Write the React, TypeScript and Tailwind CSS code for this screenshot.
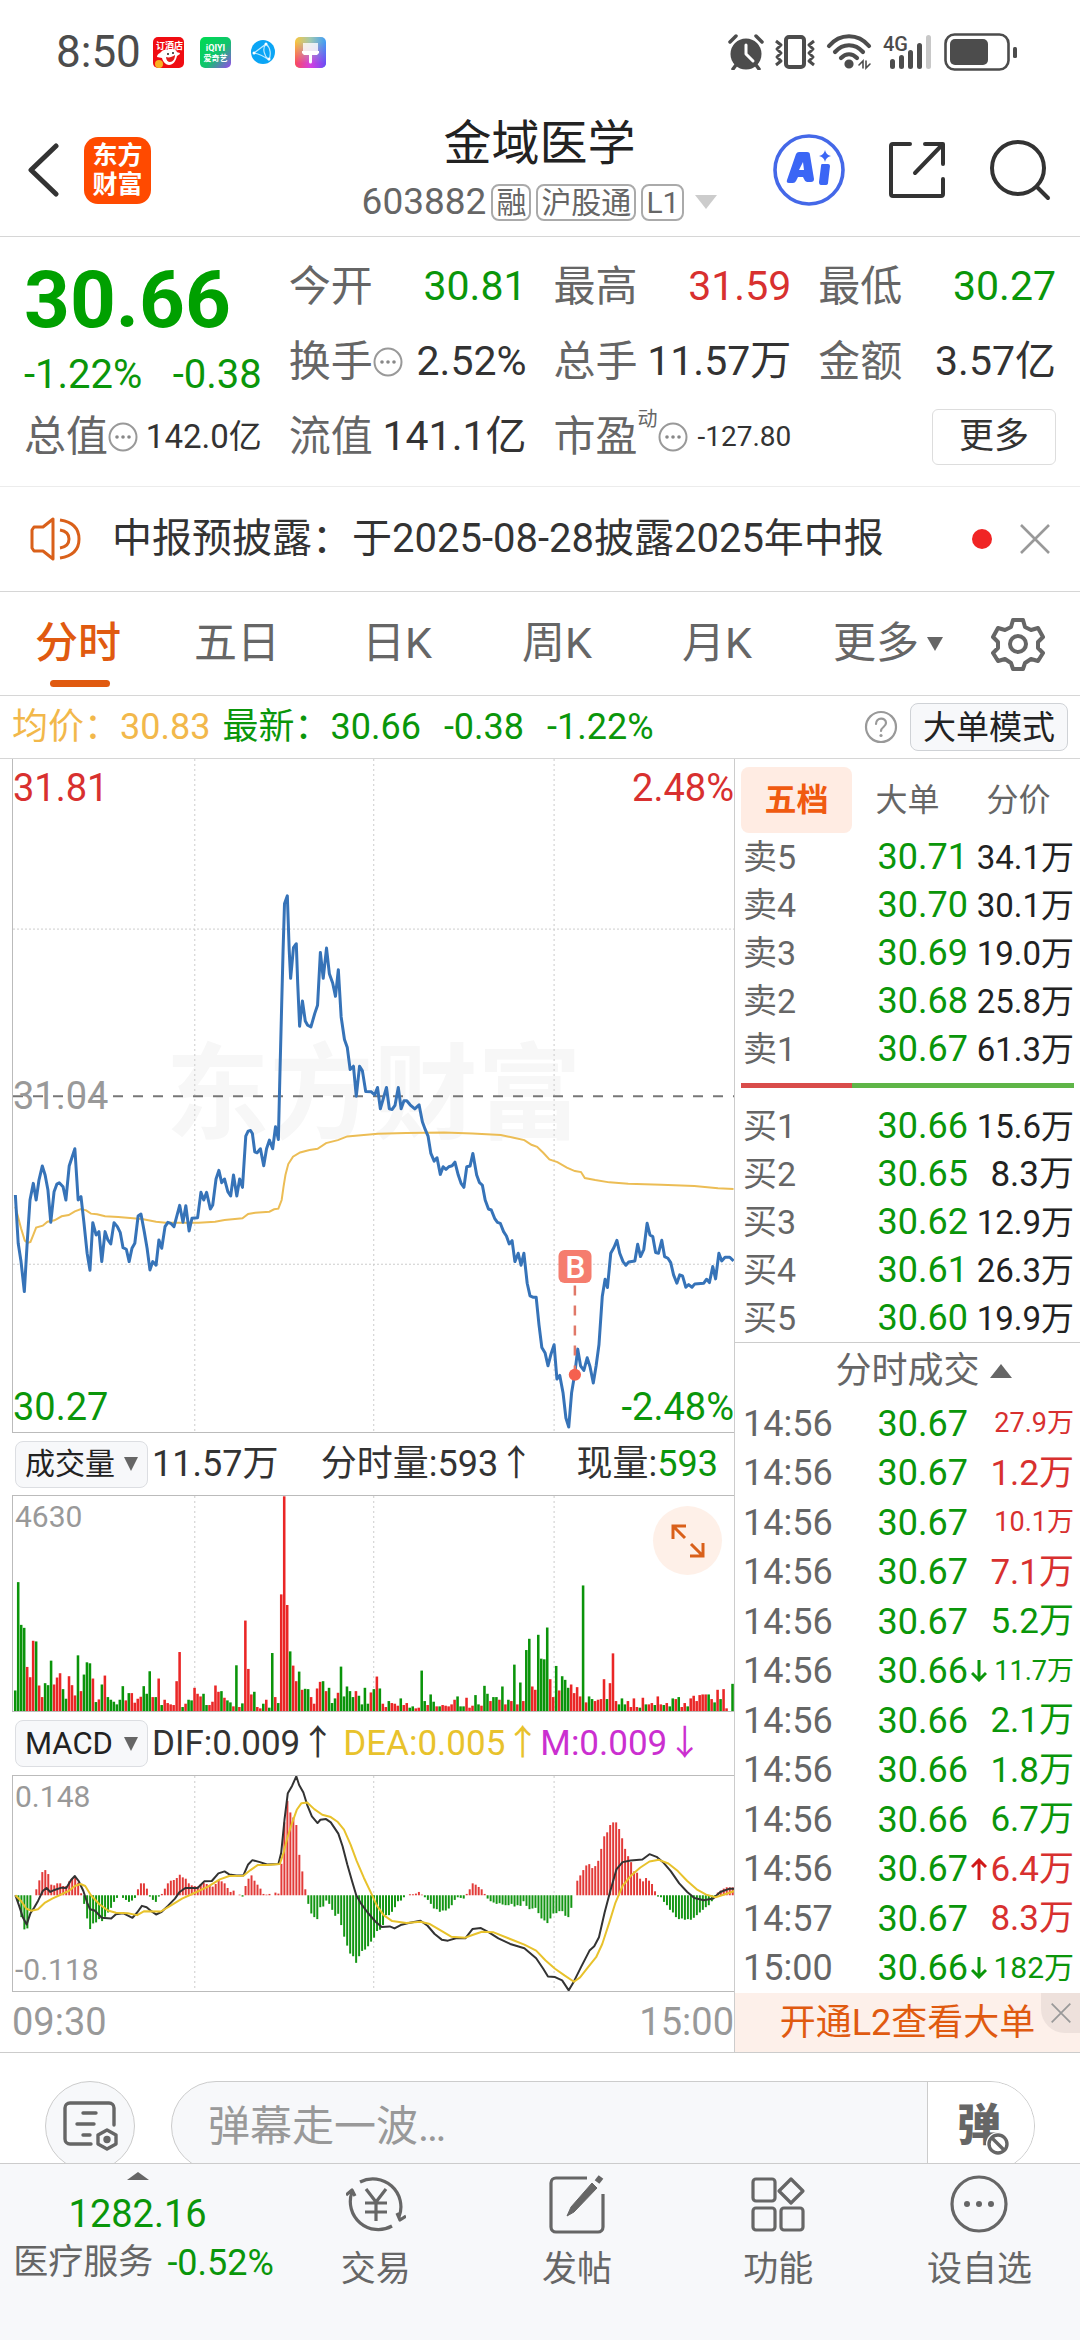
import type { ReactNode } from 'react';

const PRICE_LINE =
  '32,1335 38,1480 44,1535 51,1625 57,1480 63,1350 70,1300 76,1350 82,1290 89,1248 95,1275 101,1320 107,1417 114,1325 120,1302 125,1298 133,1310 139,1350 146,1248 158,1196 165,1350 171,1340 177,1415 184,1510 190,1561 196,1418 203,1455 209,1445 215,1535 222,1445 228,1470 234,1482 241,1418 248,1430 254,1447 260,1493 267,1498 273,1535 279,1495 285,1480 292,1398 298,1392 305,1445 311,1495 317,1560 323,1535 330,1546 336,1470 342,1495 349,1430 355,1417 361,1420 368,1430 380,1366 387,1417 393,1367 400,1443 406,1405 418,1403 425,1327 431,1350 437,1327 445,1377 450,1365 457,1287 463,1261 469,1298 475,1287 482,1325 488,1338 494,1275 501,1338 507,1287 513,1312 520,1158 525,1143 530,1141 534,1150 539,1205 544,1208 551,1196 558,1247 564,1196 570,1170 577,1196 583,1130 589,1168 592,990 596,765 599,600 602,460 608,436 612,600 615,684 621,592 627,580 630,700 634,828 640,752 646,812 651,825 658,830 666,790 672,765 678,606 684,684 691,593 697,670 704,698 710,738 716,658 722,800 729,868 735,892 741,958 748,948 754,1038 761,948 767,962 774,1024 786,1025 793,1034 799,1012 805,1076 818,1012 824,1076 830,1078 836,1066 843,1012 849,1076 855,1052 861,1052 868,1064 878,1076 887,1064 894,1115 900,1138 906,1158 912,1210 919,1233 925,1223 932,1273 938,1250 944,1258 950,1250 957,1247 963,1236 970,1275 976,1300 982,1312 988,1250 995,1248 1001,1210 1009,1275 1015,1298 1021,1305 1027,1350 1034,1377 1040,1380 1047,1405 1053,1417 1059,1420 1066,1445 1072,1458 1078,1482 1084,1472 1090,1535 1097,1510 1103,1546 1109,1510 1116,1600 1122,1638 1128,1642 1135,1642 1141,1725 1147,1793 1154,1810 1160,1848 1166,1815 1173,1785 1179,1888 1185,1877 1192,1930 1198,2005 1204,2032 1210,1930 1217,1870 1223,1798 1229,1848 1236,1862 1243,1824 1249,1850 1256,1900 1262,1848 1268,1785 1275,1640 1281,1588 1286,1613 1293,1510 1300,1492 1306,1471 1312,1510 1319,1535 1325,1546 1331,1536 1344,1533 1350,1483 1356,1520 1363,1498 1370,1420 1376,1455 1382,1460 1388,1508 1394,1510 1401,1471 1407,1520 1414,1525 1420,1538 1426,1575 1433,1600 1439,1575 1445,1578 1452,1612 1458,1604 1465,1612 1471,1602 1490,1600 1496,1588 1502,1598 1509,1550 1515,1587 1522,1510 1528,1533 1535,1522 1545,1522 1553,1533';

const AVERAGE_LINE =
  '32,1370 44,1435 52,1472 58,1479 64,1476 70,1455 76,1433 90,1427 100,1415 115,1411 130,1399 145,1395 158,1384 171,1377 182,1381 192,1391 205,1393 222,1399 250,1401 275,1404 300,1407 330,1415 350,1418 420,1418 455,1415 475,1410 513,1405 525,1392 540,1388 570,1385 580,1378 589,1376 596,1350 600,1310 604,1275 610,1242 620,1220 635,1207 655,1200 672,1196 690,1179 715,1170 735,1159 770,1155 800,1151 860,1149 940,1147 1000,1150 1060,1155 1085,1162 1110,1170 1125,1184 1137,1190 1150,1208 1163,1228 1180,1236 1200,1253 1217,1263 1230,1266 1238,1284 1260,1290 1290,1297 1330,1301 1400,1304 1470,1308 1520,1315 1553,1317';

const DIF_LINE =
  '32,558 40,590 48,625 56,646 64,612 72,595 80,575 90,545 98,536 106,548 115,542 130,535 140,536 150,512 158,500 166,515 176,545 184,580 190,600 200,604 215,626 235,628 245,615 260,612 280,626 290,610 300,590 310,594 320,606 330,616 342,608 355,590 370,568 380,548 392,536 418,536 432,516 448,515 462,492 475,486 485,495 500,498 515,498 525,465 534,452 550,458 565,465 589,464 595,430 602,330 609,250 618,228 627,199 633,225 642,248 650,285 660,320 672,340 678,330 690,328 700,338 716,372 725,410 735,465 745,515 754,558 765,585 778,610 795,638 808,654 825,652 835,658 848,648 865,642 890,635 905,650 920,675 935,692 948,695 965,688 985,688 1000,660 1018,657 1035,670 1055,688 1080,705 1110,718 1135,748 1150,780 1160,803 1175,805 1190,815 1204,845 1215,818 1230,775 1248,725 1258,712 1268,685 1280,610 1292,545 1305,480 1318,458 1335,453 1360,450 1375,434 1390,442 1405,460 1420,485 1438,522 1455,548 1470,566 1490,573 1510,568 1525,548 1545,538 1555,538';

const DEA_LINE =
  '32,558 44,575 55,598 66,605 80,600 95,580 110,568 130,555 145,545 158,530 170,524 180,530 192,558 210,585 228,604 245,611 270,612 290,618 305,606 340,607 360,590 385,568 410,552 440,532 465,510 485,500 515,499 530,482 545,467 565,467 592,464 600,430 608,385 618,340 628,300 638,280 650,278 665,298 682,315 700,322 715,337 728,360 742,405 755,455 770,505 785,550 798,590 812,618 830,636 860,642 890,638 910,645 930,662 955,683 985,686 1000,678 1020,668 1045,670 1080,690 1110,707 1135,725 1155,755 1175,780 1195,800 1215,819 1228,806 1245,775 1262,745 1275,705 1290,640 1303,580 1318,530 1335,500 1355,475 1375,456 1395,451 1415,462 1435,485 1455,515 1475,540 1495,556 1515,564 1535,555 1555,545';

// One value per minute; positive bars are up ticks, negative bars are down ticks.
const VOLUME = [
  -62, -389, -260, -251, 133, 102, 212, -210, 77, 42, -84, -78, -152, 80, 101, 114, -66, -37, 105, 78, 47, -168, 60, -110, -147, -144, 98, -27, 35, -80,
  107, -42, -34, -28, -20, -34, -75, 32, -54, 54, 25, 37, 43, -75, -52, -120, 42, -42, 98, -18, 34, 24, 20, 18, 90, 178, -12, 22, -34, -32,
  70, 52, 44, -52, -18, 18, 28, 77, 58, -60, 40, -32, -26, 14, -138, 12, -23, 273, 127, 50, -58, 12, 8, -22, 34, -10, -175, 42, -24, 352,
  648, 320, -180, 137, 90, -119, 64, -67, -66, 42, 22, 68, 88, -90, 60, -70, -24, -38, 55, -134, -44, -74, -60, -42, 60, -46, -20, -70, -22, 56,
  -66, 104, -68, 22, 12, -30, 24, 22, 16, -38, 18, 24, -10, -14, 8, 10, -122, -30, 18, -50, -28, 14, -14, 18, 16, 14, 20, 34, -44, -14,
  -14, 40, 10, 16, -48, -20, 16, -76, -52, 30, -42, -42, 34, -74, 20, -34, 30, -140, 20, -86, 30, -184, -218, 74, 64, -230, -158, -156, -252, 96,
  42, -136, 62, -105, -94, -70, 80, 54, 72, 44, -379, 26, -44, -36, 30, 34, 36, 96, -36, 84, 174, 30, -20, -38, -20, 30, 12, 38, 12, -10,
  40, -20, 20, 24, -18, 44, 20, -18, 24, -14, -38, 36, -42, 12, 24, -14, 38, 46, 30, 48, 50, 50, -50, 36, -26, 64, -36, 66, 8, 0,
  -82,
];

const MACD = [
  0, -20, -66, -103, -100, -45, 0, 18, 45, 70, 76, 64, 32, 30, 36, 36, 28, 28, 42, 50, 54, 38, 6, -26, -70, -102, -85, -82, -72, -78,
  -65, -52, -38, -20, -8, 0, -8, -14, -20, -16, -8, 18, 36, 36, 20, -4, -14, -20, -4, 4, 20, 36, 44, 46, 52, 62, 54, 50, 36, 30,
  28, 26, 34, 38, 34, 28, 26, 34, 46, 42, 36, 22, 10, 14, 0, 2, -4, 28, 50, 60, 44, 32, 20, 4, 2, 4, 0, 8, 5, 95,
  220, 285, 250, 235, 212, 122, 72, 18, -26, -55, -66, -72, -36, -34, -16, -26, -44, -62, -56, -90, -125, -152, -176, -184, -204, -184, -168, -164, -154, -140,
  -128, -108, -104, -90, -60, -60, -50, -36, -18, -16, -6, 0, 3, 3, 5, 10, 2, -6, -14, -26, -40, -42, -50, -46, -46, -40, -30, -14, -6, -8,
  -10, 4, 18, 36, 32, 25, 18, 4, -10, -18, -22, -26, -24, -28, -30, -30, -26, -34, -30, -32, -18, -32, -42, -40, -38, -54, -70, -76, -84, -70,
  -55, -54, -48, -48, -62, -66, -38, 0, 44, 60, 76, 90, 94, 82, 88, 104, 140, 178, 190, 212, 220, 220, 200, 172, 140, 118, 100, 72, 68, 50,
  42, 52, 44, 34, 12, -4, -6, -20, -30, -44, -52, -66, -72, -70, -74, -72, -74, -68, -60, -52, -44, -36, -30, -18, -6, 8, 14, 20, 24, 24,
  24,
];

const barX = (i: number) => 32 + i * 6.33;

type Level = { name: string; price: string; volume: string; big?: boolean };
const ASKS: Level[] = [
  { name: '卖5', price: '30.71', volume: '34.1万' },
  { name: '卖4', price: '30.70', volume: '30.1万' },
  { name: '卖3', price: '30.69', volume: '19.0万' },
  { name: '卖2', price: '30.68', volume: '25.8万' },
  { name: '卖1', price: '30.67', volume: '61.3万' },
];
const BIDS: Level[] = [
  { name: '买1', price: '30.66', volume: '15.6万' },
  { name: '买2', price: '30.65', volume: '8.3万', big: true },
  { name: '买3', price: '30.62', volume: '12.9万' },
  { name: '买4', price: '30.61', volume: '26.3万' },
  { name: '买5', price: '30.60', volume: '19.9万' },
];

const S = 'text-[27px]';
const M = 'text-[30px]';
const L = 'text-[35px]';
const RED = 'text-[#d8302f]';
const GREEN = 'text-[#0a960a]';
const TRADES: { time: string; price: string; dir?: 'up' | 'down'; vol: string; size: string; color: string }[] = [
  { time: '14:56', price: '30.67', vol: '27.9万', size: S, color: RED },
  { time: '14:56', price: '30.67', vol: '1.2万', size: L, color: RED },
  { time: '14:56', price: '30.67', vol: '10.1万', size: S, color: RED },
  { time: '14:56', price: '30.67', vol: '7.1万', size: L, color: RED },
  { time: '14:56', price: '30.67', vol: '5.2万', size: L, color: GREEN },
  { time: '14:56', price: '30.66', dir: 'down', vol: '11.7万', size: S, color: GREEN },
  { time: '14:56', price: '30.66', vol: '2.1万', size: L, color: GREEN },
  { time: '14:56', price: '30.66', vol: '1.8万', size: L, color: GREEN },
  { time: '14:56', price: '30.66', vol: '6.7万', size: L, color: GREEN },
  { time: '14:56', price: '30.67', dir: 'up', vol: '6.4万', size: L, color: RED },
  { time: '14:57', price: '30.67', vol: '8.3万', size: L, color: RED },
  { time: '15:00', price: '30.66', dir: 'down', vol: '182万', size: M, color: GREEN },
];

function Triangle({ up = false, className }: { up?: boolean; className: string }) {
  return (
    <svg viewBox="0 0 20 14" preserveAspectRatio="none" className={className} aria-hidden="true">
      <path d={up ? 'M0 14 10 0l10 14z' : 'M0 0h20L10 14z'} fill="currentColor" />
    </svg>
  );
}

function InfoDots() {
  return (
    <svg viewBox="0 0 30 30" className="h-[30px] w-[30px] shrink-0" aria-hidden="true">
      <circle cx="15" cy="15" r="13.5" fill="none" stroke="#999" strokeWidth="2" />
      <circle cx="9" cy="15" r="1.8" fill="#888" />
      <circle cx="15" cy="15" r="1.8" fill="#888" />
      <circle cx="21" cy="15" r="1.8" fill="#888" />
    </svg>
  );
}

function Cross({ className }: { className: string }) {
  return (
    <svg viewBox="0 0 30 30" className={className} fill="none" stroke="currentColor" strokeWidth="2.6" aria-hidden="true">
      <path d="M1 1 29 29M29 1 1 29" />
    </svg>
  );
}

function StatusBar() {
  return (
    <div className="flex h-[104px] items-center justify-between pl-14 pr-[62px] text-[#4c4c4c]">
      <div className="flex items-center">
        <span className="text-[44px] leading-none">8:50</span>
        <svg viewBox="0 0 31 31" className="ml-3 h-[31px] w-[31px]" aria-hidden="true">
          <rect width="31" height="31" rx="5" fill="#f00c12" />
          <text x="3" y="12" fontSize="9" fontWeight="700" fill="#fff">订酒店</text>
          <path d="M7 16c2-3 5-4 8-3 3-2 8-1 9 2 1 1 3 0 3 2l-3 2c-1 5-4 9-8 9-3 0-6-3-7-7l-5-1c0-2 1-3 3-4z" fill="#fff" />
          <path d="M13 20c3 1 6 0 9-2 0 4-2 7-5 7-2 0-4-2-4-5z" fill="#e01c1c" />
          <circle cx="15" cy="17" r="1" fill="#222" /><circle cx="20" cy="16" r="1" fill="#222" />
          <circle cx="6" cy="27" r="4" fill="#f8b021" />
        </svg>
        <svg viewBox="0 0 31 31" className="ml-4 h-[31px] w-[31px]" aria-hidden="true">
          <defs>
            <linearGradient id="video" x1="0" y1="0" x2="1" y2="1">
              <stop offset="0" stopColor="#00dc52" /><stop offset=".55" stopColor="#10c46c" /><stop offset="1" stopColor="#9a45f0" />
            </linearGradient>
          </defs>
          <rect width="31" height="31" rx="5" fill="url(#video)" />
          <text x="15.5" y="14" fontSize="9" fontWeight="700" textAnchor="middle" fill="#fff">iQIYI</text>
          <text x="15.5" y="24" fontSize="8" fontWeight="700" textAnchor="middle" fill="#fff">爱奇艺</text>
        </svg>
        <svg viewBox="0 0 24 24" className="ml-5 h-6 w-6" aria-hidden="true">
          <circle cx="12" cy="12" r="12" fill="#0ba5f5" />
          <path d="M3 13 15 4M3 13c5 1 11 4 15 7M15 4c-4 4-2 12 3 16M15 4c5 4 5 11 3 16" fill="none" stroke="#bfeaff" strokeWidth="1.2" />
          <circle cx="15" cy="4" r="1.500" fill="#fff" /><circle cx="3" cy="13" r="1.500" fill="#fff" /><circle cx="18" cy="19" r="1.500" fill="#fff" />
        </svg>
        <svg viewBox="0 0 31 31" className="ml-5 h-[31px] w-[31px]" aria-hidden="true">
          <defs>
            <linearGradient id="theme" x1="0" y1="0" x2="1" y2="0">
              <stop offset="0" stopColor="#fbc63c" /><stop offset=".5" stopColor="#9fc8b0" /><stop offset="1" stopColor="#3f9cf7" />
            </linearGradient>
            <linearGradient id="themeLow" x1="0" y1="0" x2="1" y2="0">
              <stop offset="0" stopColor="#f9485e" /><stop offset=".5" stopColor="#d43fe0" /><stop offset="1" stopColor="#6a4df5" />
            </linearGradient>
            <linearGradient id="fade" x1="0" y1="0" x2="0" y2="1">
              <stop offset=".15" stopColor="#000" /><stop offset=".85" stopColor="#fff" />
            </linearGradient>
            <mask id="fadeMask"><rect width="31" height="31" fill="url(#fade)" /></mask>
          </defs>
          <rect width="31" height="31" rx="5" fill="url(#theme)" />
          <rect width="31" height="31" rx="5" fill="url(#themeLow)" mask="url(#fadeMask)" />
          <path d="M8 6h15v8H8z" fill="#fff" opacity=".8" />
          <path d="M7 14h17v2l-2 2h-5v7a1.500 1.500 0 0 1-3 0v-7H9l-2-2z" fill="#fff" />
        </svg>
      </div>
      <div className="flex items-center gap-2.5">
        <svg viewBox="0 0 36 36" className="h-9 w-9" fill="none" aria-hidden="true">
          <circle cx="18" cy="20" r="15.500" fill="#4c4c4c" />
          <path d="M2 8 8 2M28 2l6 6M8 31l-3 4M28 31l3 4" stroke="#4c4c4c" strokeWidth="3.500" strokeLinecap="round" />
          <path d="M18 11v9l7 7" stroke="#fff" strokeWidth="3" strokeLinecap="round" strokeLinejoin="round" />
        </svg>
        <svg viewBox="0 0 42 36" className="h-9 w-[42px]" fill="none" stroke="#4c4c4c" aria-hidden="true">
          <rect x="12" y="3" width="18" height="30" rx="3" strokeWidth="4" />
          <path d="m2 7 5 4-4 4 4 4-4 4 4 4-5 4M40 7l-5 4 4 4-4 4 4 4-4 4 5 4" strokeWidth="3" strokeLinejoin="round" />
        </svg>
        <svg viewBox="0 0 46 36" className="h-9 w-[46px]" fill="none" stroke="#4c4c4c" strokeWidth="4.200" strokeLinecap="round" aria-hidden="true">
          <path d="M3 12C14-1 32-1 43 12M9 18c8-9 20-9 28 0M15 24c5-5 11-5 16 0" />
          <circle cx="23" cy="30" r="2.500" fill="#4c4c4c" />
          <path d="m33 31 4-4v7M40 27v7l4-4" strokeWidth="1.600" />
        </svg>
        <svg viewBox="0 0 52 36" className="h-9 w-[52px] overflow-visible" aria-hidden="true">
          <text x="1" y="17" fontSize="20" fontWeight="500" fill="#4c4c4c">4G</text>
          <rect x="8" y="25" width="5" height="10" rx="2.500" fill="#4c4c4c" />
          <rect x="17" y="21" width="5" height="14" rx="2.500" fill="#4c4c4c" />
          <rect x="26" y="16" width="5" height="19" rx="2.500" fill="#4c4c4c" />
          <rect x="35" y="9" width="5" height="26" rx="2.500" fill="#4c4c4c" />
          <rect x="44" y="1" width="5" height="34" rx="2.500" fill="#c8c8c8" />
        </svg>
        <svg viewBox="0 0 74 38" className="h-[38px] w-[74px]" aria-hidden="true">
          <rect x="1.500" y="1.500" width="63" height="35" rx="9" fill="none" stroke="#4c4c4c" strokeWidth="2.600" />
          <rect x="6" y="6" width="38" height="26" rx="5" fill="#4c4c4c" />
          <rect x="69" y="14" width="4" height="11" rx="1.500" fill="#4c4c4c" />
        </svg>
      </div>
    </div>
  );
}

function Tag({ children }: { children: ReactNode }) {
  return <span className="rounded-lg border-2 border-[#aaa] px-[3px] text-[30px] leading-[33px] text-[#666]">{children}</span>;
}

function Header() {
  return (
    <header className="grid h-[133px] grid-cols-[1fr_auto_1fr] items-center border-b border-[#d6d6d6] pl-7 pr-[29px]">
      <div className="flex items-center gap-6">
        <button aria-label="返回">
          <svg viewBox="0 0 32 56" className="h-14 w-8" fill="none" stroke="#333" strokeWidth="5" strokeLinecap="round" strokeLinejoin="round" aria-hidden="true">
            <path d="M28 4 3 28l25 24" />
          </svg>
        </button>
        <button aria-label="东方财富" className="grid h-[67px] w-[67px] place-content-center rounded-[14px] bg-[#ff4a00] text-[25px] font-bold leading-[29px] text-white">
          <span>东方</span>
          <span>财富</span>
        </button>
      </div>
      <div className="flex flex-col items-center">
        <h1 className="text-[48px] leading-[60px] text-[#222]">金域医学</h1>
        <button className="flex items-center gap-[5px] pt-1 text-[37px] leading-[48px] text-[#666]">
          603882
          <Tag>融</Tag>
          <Tag>沪股通</Tag>
          <Tag>L1</Tag>
          <Triangle className="ml-1.5 h-3.5 w-[22px] text-[#ccc]" />
        </button>
      </div>
      <div className="flex items-center justify-end gap-[43px]">
        <button aria-label="AI 助手">
          <svg viewBox="0 0 72 72" className="h-[72px] w-[72px]" aria-hidden="true">
            <circle cx="36" cy="36" r="34" fill="none" stroke="#4468e8" strokeWidth="3.600" />
            <path fillRule="evenodd" d="M23 20q1-2 3-2h8q3 0 3 3l4 24q0 3-3 3h-4q-2 0-3-3l-1-2h-5l-2 4q-1 2-3 2h-4q-3 0-2-3zM30 28l-4 8h5z" fill="#3b66f5" />
            <path d="M49 30h6q2 0 2 2l-2 17q0 2-3 2h-4q-2 0-2-3l2-16q0-2 1-2z" fill="#3b66f5" />
            <path d="M52 16q1 5 6 6-5 1-6 6-1-5-6-6 5-1 6-6z" fill="#3b66f5" />
          </svg>
        </button>
        <button aria-label="分享">
          <svg viewBox="0 0 58 58" className="h-[58px] w-[58px]" fill="none" stroke="#333" strokeWidth="4" strokeLinecap="round" strokeLinejoin="round" aria-hidden="true">
            <path d="M22 3H5a2 2 0 0 0-2 2v48a2 2 0 0 0 2 2h48a2 2 0 0 0 2-2V38M37 3h18v20M54 4 27 32" />
          </svg>
        </button>
        <button aria-label="搜索">
          <svg viewBox="0 0 62 62" className="h-[62px] w-[62px]" fill="none" stroke="#333" strokeWidth="4" strokeLinecap="round" aria-hidden="true">
            <circle cx="29" cy="29" r="26" />
            <path d="m48 48 11 11" />
          </svg>
        </button>
      </div>
    </header>
  );
}

function Stat({ label, value, color = 'text-[#333]', size = 'text-[41px]', info = false, sup }: { label: string; value: string; color?: string; size?: string; info?: boolean; sup?: string }) {
  return (
    <div className="flex h-[75px] items-center justify-between whitespace-nowrap leading-none">
      <dt className="flex items-center text-[42px] text-[#666]">
        {label}
        {sup && <sup className="top-0 -mt-9 text-[20px] leading-none">{sup}</sup>}
        {info && <InfoDots />}
      </dt>
      <dd className={`${size} ${color}`}>{value}</dd>
    </div>
  );
}

function Quote() {
  return (
    <section className="grid grid-cols-4 gap-x-[27px] border-b border-[#ececec] px-6 pb-3 pt-3">
      <div className="flex flex-col">
        <div className="flex h-[102px] items-center text-[80px] font-bold leading-none text-[#00a000]">30.66</div>
        <div className="flex h-12 items-center justify-between text-[40px] leading-none text-[#0a960a]">
          <span>-1.22%</span>
          <span>-0.38</span>
        </div>
        <dl><Stat label="总值" value="142.0亿" size="text-[33px]" info /></dl>
      </div>
      <dl>
        <Stat label="今开" value="30.81" color="text-[#0a960a]" />
        <Stat label="换手" value="2.52%" info />
        <Stat label="流值" value="141.1亿" />
      </dl>
      <dl>
        <Stat label="最高" value="31.59" color="text-[#d8302f]" />
        <Stat label="总手" value="11.57万" />
        <Stat label="市盈" value="-127.80" size="text-[28px]" info sup="动" />
      </dl>
      <div>
        <dl>
          <Stat label="最低" value="30.27" color="text-[#0a960a]" />
          <Stat label="金额" value="3.57亿" />
        </dl>
        <div className="flex h-[75px] items-center justify-end">
          <button className="h-14 w-[124px] rounded-md border border-[#ddd] text-[35px] leading-none text-[#333]">更多</button>
        </div>
      </div>
    </section>
  );
}

function Notice() {
  return (
    <section className="flex h-[105px] items-center border-b border-[#d6d6d6] px-[30px]">
      <svg viewBox="0 0 52 44" className="h-11 w-[52px]" fill="none" stroke="#d9601a" strokeWidth="3" strokeLinejoin="round" aria-hidden="true">
        <path d="M23 2v40l-10-8H4l-2-3V13l2-3h9z" />
        <path d="M30 3c13 2 19 9 19 19s-6 17-19 19M30 13c6 1 9 4 9 9s-3 8-9 9" />
      </svg>
      <p className="ml-[30px] flex-1 text-[40px] leading-none text-[#333]">中报预披露：于2025-08-28披露2025年中报</p>
      <span className="h-5 w-5 rounded-full bg-[#f02424]" />
      <button aria-label="关闭" className="ml-7 text-[#999]"><Cross className="h-[30px] w-[30px]" /></button>
    </section>
  );
}

function PeriodTabs() {
  return (
    <nav className="grid h-[104px] grid-cols-[repeat(5,160fr)_176fr_104fr] border-b border-[#d6d6d6] text-[43px] leading-none text-[#666]">
      <button aria-current="page" className="relative pr-1 font-medium text-[#e05a10]">
        分时
        <span className="absolute bottom-2 left-1/2 h-[7px] w-[60px] -translate-x-1/2 rounded bg-[#e05a10]" />
      </button>
      <button className="pr-1.5">五日</button>
      <button className="pr-1.5">日K</button>
      <button className="pr-1.5">周K</button>
      <button className="pr-1.5">月K</button>
      <button className="flex items-center justify-center gap-2">
        更多
        <Triangle className="h-3.5 w-4" />
      </button>
      <button aria-label="设置" className="flex items-center justify-center pr-5">
        <svg viewBox="0 0 54 54" className="h-[54px] w-[54px]" fill="none" stroke="#666" strokeWidth="4" strokeLinejoin="round" aria-hidden="true">
          <path d="M22 3h10l2 7 6 3 7-2 5 9-5 5v6l5 5-5 8-7-2-6 4-2 6H22l-2-6-6-4-7 2-5-8 5-5v-6l-5-5 5-9 7 2 6-3z" />
          <circle cx="27" cy="27" r="8" />
        </svg>
      </button>
    </nav>
  );
}

function SummaryRow() {
  return (
    <div className="flex h-[63px] items-center border-b border-[#d6d6d6] px-3 text-[36px] leading-none">
      <span className="mr-3 text-[#f2b84b]">均价：30.83</span>
      <span className="flex gap-[23px] text-[#0a960a]">
        <span>最新：30.66</span>
        <span>-0.38</span>
        <span>-1.22%</span>
      </span>
      <button aria-label="帮助" className="ml-auto mr-3">
        <svg viewBox="0 0 34 34" className="h-[34px] w-[34px]" aria-hidden="true">
          <circle cx="17" cy="17" r="15" fill="none" stroke="#999" strokeWidth="2.200" />
          <path d="M12 14c0-7 10-7 10-1 0 4-5 4-5 8" fill="none" stroke="#999" strokeWidth="2.200" strokeLinecap="round" />
          <circle cx="17" cy="25.500" r="1.600" fill="#999" />
        </svg>
      </button>
      <button className="h-12 rounded-lg border border-[#cfd2d6] bg-[#f7f8fa] px-3 text-[33px] leading-none text-[#222]">大单模式</button>
    </div>
  );
}

function Grid({ top, bottom }: { top: number; bottom: number }) {
  return (
    <>
      {[412, 791, 1173].map((x) => (
        <line key={x} x1={x} x2={x} y1={top} y2={bottom} stroke="#ccc" strokeWidth="1" strokeDasharray="2 3" vectorEffect="non-scaling-stroke" />
      ))}
    </>
  );
}

function PriceChart() {
  return (
    <div className="relative border-b border-l border-[#bbb] text-[38px] leading-none">
      <div className="absolute inset-0 flex items-center justify-center text-[104px] font-bold text-[#f7f7f7]">东方财富</div>
      <svg viewBox="27 25 1527 2022" preserveAspectRatio="none" className="relative block h-[673px] w-full" fill="none" role="img" aria-label="分时走势图">
        <Grid top={25} bottom={2047} />
        <path d="M27 536h1529M27 1543h1529" stroke="#ccc" strokeWidth="1" strokeDasharray="2 2" vectorEffect="non-scaling-stroke" />
        <path d="M27 1038h1529" stroke="#777" strokeWidth="2" strokeDasharray="10 10" vectorEffect="non-scaling-stroke" />
        <polyline points={AVERAGE_LINE} stroke="#ecbd55" strokeWidth="2" vectorEffect="non-scaling-stroke" />
        <polyline points={PRICE_LINE} stroke="#3673b8" strokeWidth="3" strokeLinejoin="round" vectorEffect="non-scaling-stroke" />
        <path d="M1217 1607v260" stroke="#e07868" strokeWidth="2.500" strokeDasharray="10 10" vectorEffect="non-scaling-stroke" />
        <ellipse cx="1217" cy="1875" rx="13" ry="18" fill="#f5604f" />
      </svg>
      <span className="absolute left-[78%] top-[73%] flex h-[33px] w-[33px] -translate-x-1/2 items-center justify-center rounded-md bg-[#f57d6e] text-[32px] font-medium text-white">B</span>
      <span className="absolute left-0 top-2.5 text-[#d8302f]">31.81</span>
      <span className="absolute right-0 top-2.5 text-[#d8302f]">2.48%</span>
      <span className="absolute left-0 top-1/2 -translate-y-1/2 text-[#999]">31.04</span>
      <span className="absolute bottom-1.5 left-0 text-[#0a960a]">30.27</span>
      <span className="absolute bottom-1.5 right-0 text-[#0a960a]">-2.48%</span>
    </div>
  );
}

function IndicatorButton({ children }: { children: ReactNode }) {
  return (
    <button className="mr-1 flex h-[47px] w-[133px] items-center justify-between rounded-lg border border-[#dcdee2] bg-[#f7f8fa] px-[9px] text-[#222]">
      {children}
      <Triangle className="h-3.5 w-3.5 text-[#666]" />
    </button>
  );
}

function VolumeChart() {
  return (
    <>
      <div className="flex h-[62px] items-center whitespace-nowrap pl-[3px] pr-4 text-[36px] leading-none text-[#333]">
        <IndicatorButton><span className="text-[30px]">成交量</span></IndicatorButton>
        <span>11.57万</span>
        <span className="mx-auto">分时量:593↑</span>
        <span>现量:<span className="text-[#0a960a]">593</span></span>
      </div>
      <div className="relative border border-r-0 border-[#bbb]">
        <svg viewBox="27 198 1527 649" preserveAspectRatio="none" className="block h-[215px] w-full" role="img" aria-label="成交量图">
          <Grid top={198} bottom={847} />
          {VOLUME.map((v, i) => (
            <rect key={i} x={barX(i) - 3} y={847 - Math.abs(v)} width="5.400" height={Math.abs(v)} fill={v > 0 ? '#ea2626' : '#0a940a'} />
          ))}
        </svg>
        <span className="absolute left-0.5 top-1.5 text-[30px] leading-none text-[#999]">4630</span>
        <button aria-label="全屏" className="absolute right-3 top-2.5 flex h-[69px] w-[69px] items-center justify-center rounded-full bg-[#fef0e8]">
          <svg viewBox="0 0 34 34" className="h-[34px] w-[34px]" fill="none" stroke="#d9601a" strokeWidth="3" aria-hidden="true">
            <path d="M2 15V2h13M3 3l11 11M32 19v13H19M31 31 20 20" />
          </svg>
        </button>
      </div>
    </>
  );
}

function MacdChart() {
  return (
    <>
      <div className="flex h-[63px] items-center whitespace-nowrap pl-[3px] text-[35px] leading-none">
        <IndicatorButton><span className="text-[31px]">MACD</span></IndicatorButton>
        <span className="mr-2 text-[#333]">DIF:0.009↑</span>
        <span className="text-[#e8c22c]">DEA:0.005↑</span>
        <span className="text-[#cb2fd0]">M:0.009↓</span>
      </div>
      <div className="relative border border-r-0 border-[#bbb] text-[30px] leading-none text-[#999]">
        <svg viewBox="27 198 1527 649" preserveAspectRatio="none" className="block h-[215px] w-full" fill="none" role="img" aria-label="MACD 图">
          <Grid top={198} bottom={847} />
          {MACD.map((v, i) => (
            <rect key={i} x={barX(i) - 2} y={v > 0 ? 558 - v : 558} width="4.200" height={Math.abs(v)} fill={v > 0 ? '#e23a38' : '#149614'} />
          ))}
          <polyline points={DIF_LINE} stroke="#333" strokeWidth="2" strokeLinejoin="round" vectorEffect="non-scaling-stroke" />
          <polyline points={DEA_LINE} stroke="#e8c22c" strokeWidth="2" strokeLinejoin="round" vectorEffect="non-scaling-stroke" />
        </svg>
        <span className="absolute left-0.5 top-1.5">0.148</span>
        <span className="absolute bottom-1.5 left-0.5">-0.118</span>
      </div>
      <div className="flex h-[60px] items-center justify-between text-[38px] leading-none text-[#999]">
        <span>09:30</span>
        <span>15:00</span>
      </div>
    </>
  );
}

function Levels({ rows, label }: { rows: Level[]; label: string }) {
  return (
    <table aria-label={label} className="w-full leading-none">
      <tbody>
        {rows.map((r) => (
          <tr key={r.name} className="h-12">
            <th scope="row" className="p-0 text-left text-[34px] font-normal text-[#666]">{r.name}</th>
            <td className="p-0 text-right text-[36px] text-[#0a960a]">{r.price}</td>
            <td className={`w-[106px] p-0 text-right text-[#222] ${r.big ? 'text-[35px]' : 'text-[33px]'}`}>{r.volume}</td>
          </tr>
        ))}
      </tbody>
    </table>
  );
}

function OrderBook() {
  return (
    <aside className="flex w-[346px] shrink-0 flex-col border-l border-[#ccc]">
      <div className="flex h-[78px] items-center pl-1.5 pt-1 text-[32px] leading-none text-[#666]">
        <button aria-current="true" className="h-[66px] w-[111px] rounded-lg bg-[#ffece3] font-bold text-[#f05a10]">五档</button>
        <button className="h-[66px] w-[111px]">大单</button>
        <button className="h-[66px] w-[111px]">分价</button>
      </div>
      <div className="border-b border-[#ccc] pl-2 pr-1.5">
        <div className="-mt-1"><Levels rows={ASKS} label="卖盘" /></div>
        <div className="-ml-0.5 mb-3.5 mt-2.5 flex h-[5px]">
          <span className="w-1/3 bg-[#d94c4a]" />
          <span className="flex-1 bg-[#5fb548]" />
        </div>
        <Levels rows={BIDS} label="买盘" />
      </div>
      <button className="flex h-14 items-center justify-center gap-2.5 pl-8 text-[36px] leading-none text-[#666]">
        分时成交
        <Triangle up className="h-3.5 w-[22px]" />
      </button>
      <div className="flex flex-1 flex-col pl-2 pr-1.5">
        <table aria-label="分时成交" className="w-full flex-1 leading-none">
          <tbody>
            {TRADES.map((t, i) => (
              <tr key={i} className="h-[49px]">
                <td className="p-0 text-[36px] text-[#666]">{t.time}</td>
                <td className="p-0 text-right text-[36px] text-[#0a960a]">{t.price}</td>
                <td className="w-[22px] p-0">
                  {t.dir && (
                    <svg viewBox="0 0 16 22" className={t.dir === 'up' ? 'mx-auto h-[22px] w-4 text-[#d01818]' : 'mx-auto h-[22px] w-4 rotate-180 text-[#0a960a]'} fill="none" stroke="currentColor" strokeWidth="3" aria-hidden="true">
                      <path d="M8 22V2M1 9l7-7 7 7" />
                    </svg>
                  )}
                </td>
                <td className={`w-[84px] whitespace-nowrap p-0 text-right ${t.size} ${t.color}`}>{t.vol}</td>
              </tr>
            ))}
          </tbody>
        </table>
      </div>
      <div className="relative bg-[#fdf0ea]">
        <button className="h-[59px] w-full text-[36px] leading-none text-[#e05a10]">开通L2查看大单</button>
        <button aria-label="关闭" className="absolute right-0 top-0 flex h-10 w-[39px] items-center justify-center rounded-bl-3xl bg-[#eee1dc] text-[#999]">
          <Cross className="h-5 w-5" />
        </button>
      </div>
    </aside>
  );
}

function CommentBar() {
  return (
    <div className="flex h-[110px] gap-9 overflow-hidden px-[45px] pt-7">
      <button aria-label="弹幕设置" className="flex h-[90px] w-[90px] shrink-0 items-center justify-center rounded-full border border-[#ccc] bg-[#f7f8fa]">
        <svg viewBox="0 0 56 52" className="h-[52px] w-14" fill="none" stroke="#666" strokeWidth="3.400" strokeLinecap="round" strokeLinejoin="round" aria-hidden="true">
          <path d="M29 44H8a5 5 0 0 1-5-5V8a5 5 0 0 1 5-5h39a5 5 0 0 1 5 5v17M21 13h13M15 24h17M21 35h7" />
          <path d="m36 35 9-5 9 5v9l-9 5-9-5z" />
          <circle cx="45" cy="39.500" r="2" fill="#666" />
        </svg>
      </button>
      <div className="flex h-[90px] flex-1 overflow-hidden rounded-full border border-[#ccc] bg-[#f7f8fa]">
        <input aria-label="弹幕" placeholder="弹幕走一波…" className="min-w-0 flex-1 bg-transparent pl-9 text-[42px] leading-none outline-none placeholder:text-[#999]" />
        <button aria-label="关闭弹幕" className="relative w-[107px] border-l border-[#ccc] bg-white pr-1 text-[44px] font-black leading-none text-[#666]">
          弹
          <svg viewBox="0 0 24 24" className="absolute bottom-3.5 right-6 h-6 w-6" aria-hidden="true">
            <circle cx="12" cy="12" r="9" fill="#fff" stroke="#fff" strokeWidth="6" />
            <circle cx="12" cy="12" r="9" fill="none" stroke="#666" strokeWidth="3.400" />
            <path d="m6 6 12 12" stroke="#666" strokeWidth="3.400" />
          </svg>
        </button>
      </div>
    </div>
  );
}

function NavItem({ label, children }: { label: string; children: ReactNode }) {
  return (
    <button className="flex flex-col items-center gap-3.5 pt-2.5 text-[35px] leading-[44px] text-[#666]">
      <svg viewBox="0 0 60 60" className="h-[60px] w-[60px]" fill="none" stroke="#666" strokeWidth="3.200" strokeLinejoin="round" aria-hidden="true">
        {children}
      </svg>
      {label}
    </button>
  );
}

function BottomNav() {
  return (
    <nav className="grid flex-1 grid-cols-[275fr_repeat(4,201fr)] items-start border-t border-[#ccc] bg-[#f7f8fa] pb-8">
      <button className="flex flex-col items-center whitespace-nowrap pt-2 leading-none">
        <Triangle up className="h-2 w-[22px] text-[#666]" />
        <span className="pt-[15px] text-[38px] text-[#0a960a]">1282.16</span>
        <span className="flex gap-3.5 pl-3 pt-3 text-[36px] text-[#0a960a]"><span className="text-[35px] text-[#666]">医疗服务</span>-0.52%</span>
      </button>
      <NavItem label="交易">
        <path d="M14 8a28 28 0 0 1 39 35M46 52A28 28 0 0 1 6 18M0 21l6-5 3 6M60 42l-6 4-3-7" />
        <path d="m20 15 10 13 10-13M19 29h22M19 38h22M30 28v19" />
      </NavItem>
      <NavItem label="发帖">
        <path d="M40 4H9a5 5 0 0 0-5 5v44a5 5 0 0 0 5 5h42a5 5 0 0 0 5-5V20" />
        <path d="M20 42l4-9L45 9l5 5-23 24z" fill="#666" strokeWidth="1" />
        <path d="m50 8 4-5" strokeWidth="6" />
      </NavItem>
      <NavItem label="功能">
        <rect x="5" y="5" width="22" height="22" rx="3" />
        <rect x="5" y="34" width="22" height="22" rx="3" />
        <rect x="33" y="34" width="22" height="22" rx="3" />
        <path d="m43 5 12 12-12 12-12-12z" />
      </NavItem>
      <NavItem label="设自选">
        <circle cx="30" cy="30" r="27" />
        <g fill="#666" stroke="none"><circle cx="18" cy="30" r="3" /><circle cx="30" cy="30" r="3" /><circle cx="42" cy="30" r="3" /></g>
      </NavItem>
    </nav>
  );
}

export default function App() {
  return (
    <div className="flex min-h-screen flex-col bg-white font-[Roboto,'Noto_Sans_CJK_SC',sans-serif]">
      <StatusBar />
      <Header />
      <Quote />
      <Notice />
      <PeriodTabs />
      <SummaryRow />
      <main className="flex border-b border-[#ccc]">
        <div className="min-w-0 flex-1 pl-3">
          <PriceChart />
          <VolumeChart />
          <MacdChart />
        </div>
        <OrderBook />
      </main>
      <CommentBar />
      <BottomNav />
    </div>
  );
}
